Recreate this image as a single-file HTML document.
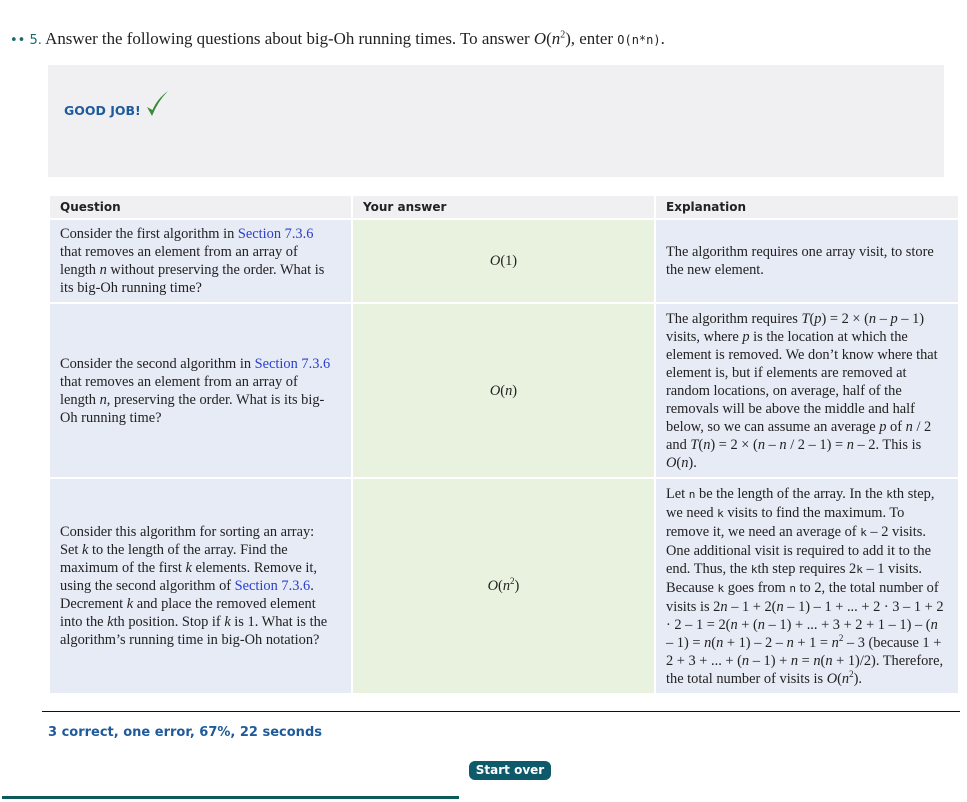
<!DOCTYPE html>
<html><head><style>
body{margin:0;width:967px;height:802px;background:#fff;position:relative;font-family:"Liberation Serif",serif;font-size:14.4px;color:#222;overflow:hidden}
.a{position:absolute;box-sizing:border-box}
.c{display:flex;align-items:center;padding:0 10px;line-height:18px}
.c>div{width:100%}
.q{background:#e7ebf6}
.qq{padding-right:18px}
.g{background:#e9f1df;text-align:center}
.h{background:#f0f0f3;font-family:"DejaVu Sans",sans-serif;font-size:12px;font-weight:bold;color:#222;padding:0 10px;line-height:22px}
a{color:#2a3fc9;text-decoration:none}
.m{font-family:"DejaVu Sans Mono",monospace;font-size:11px}
i{font-style:italic}
sup{line-height:0}
</style></head><body>
<div class="a" style="left:10px;top:29px;font-size:16.9px;white-space:nowrap"><span style="color:#1a6a6a;font-family:'DejaVu Sans',sans-serif;font-size:13px">•• 5.</span> Answer the following questions about big-Oh running times. To answer <i>O</i>(<i>n</i><sup style="font-size:10px">2</sup>), enter <span class="m" style="font-size:12px">O(n*n)</span>.</div>
<div class="a" style="left:48px;top:65px;width:896px;height:112px;background:#f0f0f3"></div>
<div class="a" style="left:64px;top:103px;font-family:'DejaVu Sans',sans-serif;font-size:12.5px;font-weight:bold;color:#1f5a9a">GOOD JOB!</div>
<svg class="a" style="left:145px;top:89px" width="24" height="30" viewBox="0 0 24 30"><path d="M2 18 L7 27 Q13 12 23 2 Q12 10 7.5 21 Z" fill="#3c8a3c"/></svg>

<div class="a h" style="left:50px;top:196px;width:301px;height:22px">Question</div>
<div class="a h" style="left:353px;top:196px;width:301px;height:22px">Your answer</div>
<div class="a h" style="left:656px;top:196px;width:302px;height:22px">Explanation</div>

<div class="a c q qq" style="left:50px;top:220px;width:301px;height:82px"><div>Consider the first algorithm in <a>Section 7.3.6</a> that removes an element from an array of length <i>n</i> without preserving the order. What is its big-Oh running time?</div></div>
<div class="a c g" style="left:353px;top:220px;width:301px;height:82px"><div><i>O</i>(1)</div></div>
<div class="a c q" style="left:656px;top:220px;width:302px;height:82px"><div>The algorithm requires one array visit, to store the new element.</div></div>

<div class="a c q qq" style="left:50px;top:304px;width:301px;height:173px"><div>Consider the second algorithm in <a>Section 7.3.6</a> that removes an element from an array of length <i>n</i>, preserving the order. What is its big-Oh running time?</div></div>
<div class="a c g" style="left:353px;top:304px;width:301px;height:173px"><div><i>O</i>(<i>n</i>)</div></div>
<div class="a c q" style="left:656px;top:304px;width:302px;height:173px"><div>The algorithm requires <i>T</i>(<i>p</i>) = 2 × (<i>n</i> – <i>p</i> – 1) visits, where <i>p</i> is the location at which the element is removed. We don’t know where that element is, but if elements are removed at random locations, on average, half of the removals will be above the middle and half below, so we can assume an average <i>p</i> of <i>n</i> / 2 and <i>T</i>(<i>n</i>) = 2 × (<i>n</i> – <i>n</i> / 2 – 1) = <i>n</i> – 2. This is <i>O</i>(<i>n</i>).</div></div>

<div class="a c q qq" style="left:50px;top:479px;width:301px;height:214px"><div>Consider this algorithm for sorting an array: Set <i>k</i> to the length of the array. Find the maximum of the first <i>k</i> elements. Remove it, using the second algorithm of <a>Section 7.3.6</a>. Decrement <i>k</i> and place the removed element into the <i>k</i>th position. Stop if <i>k</i> is 1. What is the algorithm’s running time in big-Oh notation?</div></div>
<div class="a c g" style="left:353px;top:479px;width:301px;height:214px"><div><i>O</i>(<i>n</i><sup style="font-size:9px">2</sup>)</div></div>
<div class="a c q" style="left:656px;top:479px;width:302px;height:214px"><div>Let <span class="m">n</span> be the length of the array. In the <span class="m">k</span>th step, we need <span class="m">k</span> visits to find the maximum. To remove it, we need an average of <span class="m">k</span> – 2 visits. One additional visit is required to add it to the end. Thus, the <span class="m">k</span>th step requires 2<span class="m">k</span> – 1 visits. Because <span class="m">k</span> goes from <span class="m">n</span> to 2, the total number of visits is 2<i>n</i> – 1 + 2(<i>n</i> – 1) – 1 + ... + 2 · 3 – 1 + 2 · 2 – 1 = 2(<i>n</i> + (<i>n</i> – 1) + ... + 3 + 2 + 1 – 1) – (<i>n</i> – 1) = <i>n</i>(<i>n</i> + 1) – 2 – <i>n</i> + 1 = <i>n</i><sup style="font-size:9px">2</sup> – 3 (because 1 + 2 + 3 + ... + (<i>n</i> – 1) + <i>n</i> = <i>n</i>(<i>n</i> + 1)/2). Therefore, the total number of visits is <i>O</i>(<i>n</i><sup style="font-size:9px">2</sup>).</div></div>

<div class="a" style="left:42px;top:711px;width:918px;height:1px;background:#111"></div>
<div class="a" style="left:48px;top:725px;font-family:'DejaVu Sans',sans-serif;font-size:13px;font-weight:bold;color:#1f5a9a">3 correct, one error, 67%, 22 seconds</div>
<div class="a" style="left:469px;top:761px;width:82px;height:19px;background:#0e5a6a;border-radius:6px;color:#fff;font-family:'DejaVu Sans',sans-serif;font-size:12px;font-weight:bold;text-align:center;line-height:18px">Start over</div>
<div class="a" style="left:2px;top:796px;width:457px;height:3px;background:#0e5a5a"></div>
</body></html>
